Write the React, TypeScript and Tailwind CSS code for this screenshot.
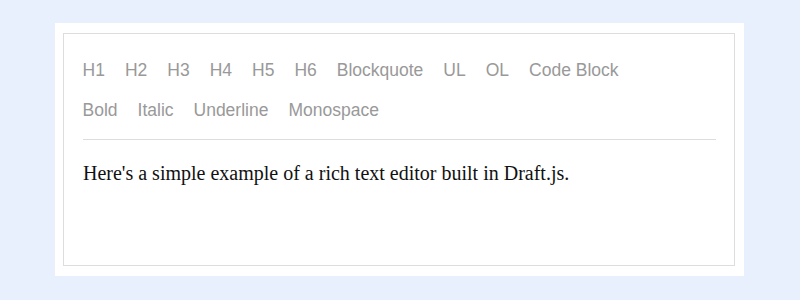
import React from "react";

const blockTypes = ["H1", "H2", "H3", "H4", "H5", "H6", "Blockquote", "UL", "OL", "Code Block"];
const inlineTypes = ["Bold", "Italic", "Underline", "Monospace"];

export default function App() {
  return (
    <div className="w-[800px] h-[300px] bg-[#e8f0fe] pt-[23px] pl-[55px]">
      <div className="w-[689px] h-[253px] bg-white pt-[10px] pl-[8px]">
        <div className="w-[672px] h-[233px] border border-[#dddddd] pl-[18.5px] pr-[18px] pt-[25.5px] flex flex-col">
          <div
            className="flex flex-col gap-[20px] text-[17.5px] leading-[20px] text-[#999999] select-none"
            style={{ fontFamily: '"Liberation Sans", Arial, sans-serif' }}
          >
            <div className="flex flex-row flex-wrap">
              {blockTypes.map((t) => (
                <span key={t} className="mr-[20px] cursor-pointer">
                  {t}
                </span>
              ))}
            </div>
            <div className="flex flex-row flex-wrap">
              {inlineTypes.map((t) => (
                <span key={t} className="mr-[20px] cursor-pointer">
                  {t}
                </span>
              ))}
            </div>
          </div>
          <div className="mt-[19.5px] border-t border-[#dddddd] pt-[22px]">
            <div
              className="text-[20px] leading-[23px] text-[#111111] pl-[0.5px]"
              style={{ fontFamily: '"Liberation Serif", "Times New Roman", serif' }}
            >
              Here's a simple example of a rich text editor built in Draft.js.
            </div>
          </div>
        </div>
      </div>
    </div>
  );
}
